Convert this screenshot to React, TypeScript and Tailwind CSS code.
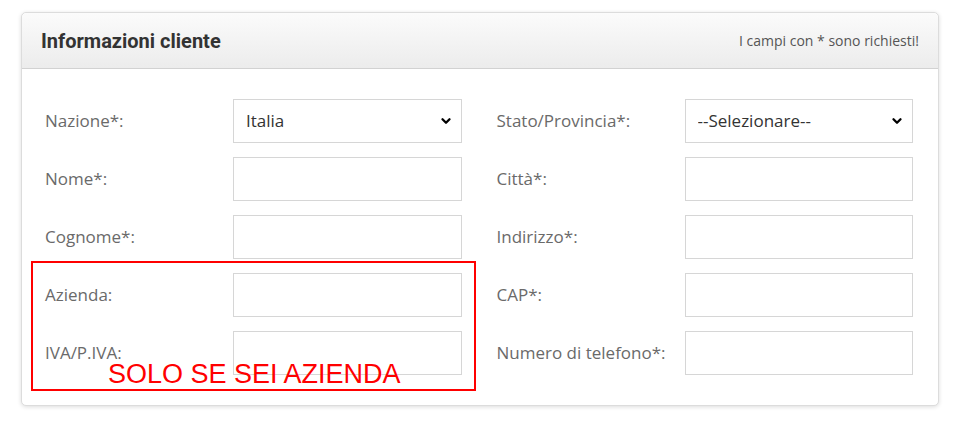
import { ChevronDown } from 'lucide-react';

type Field = {
    label: string;
    select?: string;
};

const LEFT: Field[] = [
    { label: 'Nazione*:', select: 'Italia' },
    { label: 'Nome*:' },
    { label: 'Cognome*:' },
    { label: 'Azienda:' },
    { label: 'IVA/P.IVA:' },
];

const RIGHT: Field[] = [
    { label: 'Stato/Provincia*:', select: '--Selezionare--' },
    { label: 'Città*:' },
    { label: 'Indirizzo*:' },
    { label: 'CAP*:' },
    { label: 'Numero di telefono*:' },
];

function FieldRow({ field }: { field: Field }) {
    return (
        <div className="flex items-center h-[44px]">
            <label className="w-[188px] shrink-0 text-[17px] text-[#6a6a6a]">{field.label}</label>
            {field.select ? (
                <div className="relative flex-1 min-w-0 h-full">
                    <select
                        defaultValue={field.select}
                        className="appearance-none w-full h-full border border-[#d6d6d6] bg-white pl-[12px] pr-8 text-[17px] text-[#333] outline-none"
                    >
                        <option>{field.select}</option>
                    </select>
                    <ChevronDown
                        className="absolute right-[9px] top-1/2 -translate-y-1/2 w-[14px] h-[14px] text-black pointer-events-none"
                        strokeWidth={4}
                    />
                </div>
            ) : (
                <input type="text" className="flex-1 min-w-0 w-0 h-full border border-[#d6d6d6] bg-white px-3 text-[17px] outline-none" />
            )}
        </div>
    );
}

export default function App() {
    return (
        <div className="bg-white min-h-[423px] pt-[12px] pl-[21px] font-['Open_Sans',sans-serif]">
            <div className="relative w-[918px] rounded-[5px] border border-[#dcdcdc] bg-white shadow-[0_1px_4px_rgba(0,0,0,0.14)]">
                <header className="flex items-center justify-between h-[56px] px-[19px] rounded-t-[5px] border-b border-[#d2d2d2] bg-gradient-to-b from-[#fbfbfb] to-[#ececec]">
                    <h2 className="font-['Roboto',sans-serif] font-bold text-[20px] text-[#333]">Informazioni cliente</h2>
                    <span className="text-[14px] text-[#555]">I campi con * sono richiesti!</span>
                </header>

                <div className="grid grid-cols-2 gap-x-[35px] pt-[30px] pb-[30px] pl-[23px] pr-[25px]">
                    <div className="flex flex-col gap-[14px]">
                        {LEFT.map((f) => (
                            <FieldRow key={f.label} field={f} />
                        ))}
                    </div>
                    <div className="flex flex-col gap-[14px]">
                        {RIGHT.map((f) => (
                            <FieldRow key={f.label} field={f} />
                        ))}
                    </div>
                </div>

                {/* annotation */}
                <div className="absolute left-[9px] top-[248px] w-[445px] h-[130px] border-2 border-[#ff0000] pointer-events-none">
                    <span className="absolute left-[75px] top-[98px] font-['Liberation_Sans',Arial,sans-serif] text-[27px] leading-none text-[#ff0000]">
                        SOLO SE SEI AZIENDA
                    </span>
                </div>
            </div>
        </div>
    );
}
